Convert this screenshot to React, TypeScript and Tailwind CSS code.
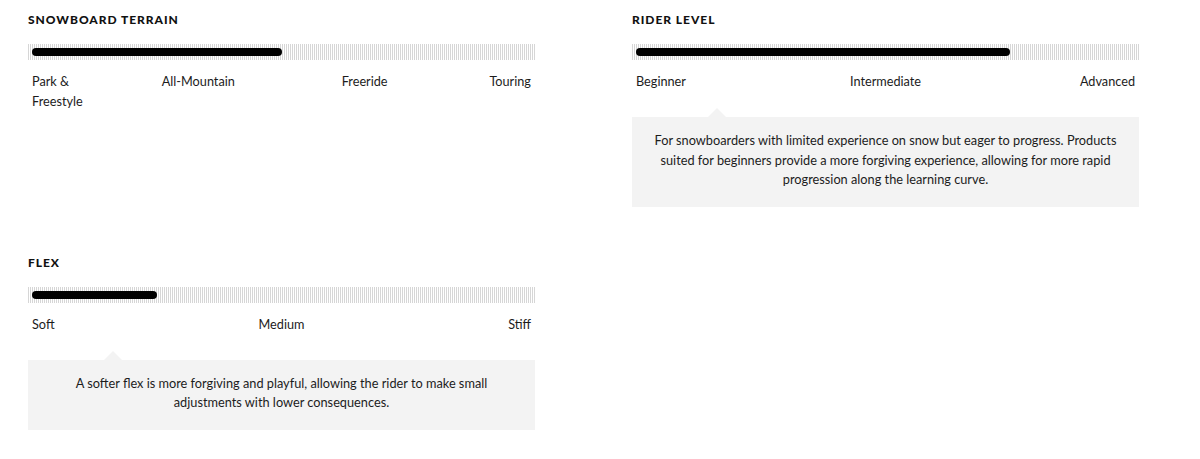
import React from "react";

type Scale = {
  title: string;
  labels: string[];
  value: number; // 0..1
  tip?: string;
};

const scales: Scale[] = [
  {
    title: "Snowboard Terrain",
    labels: ["Park & Freestyle", "All-Mountain", "Freeride", "Touring"],
    value: 0.5,
  },
  {
    title: "Rider Level",
    labels: ["Beginner", "Intermediate", "Advanced"],
    value: 0.75,
    tip: "For snowboarders with limited experience on snow but eager to progress. Products suited for beginners provide a more forgiving experience, allowing for more rapid progression along the learning curve.",
  },
  {
    title: "Flex",
    labels: ["Soft", "Medium", "Stiff"],
    value: 0.25,
    tip: "A softer flex is more forgiving and playful, allowing the rider to make small adjustments with lower consequences.",
  },
];

function Labels({ labels }: { labels: string[] }) {
  const n = labels.length;
  const edge = 100 / ((n - 1) * 2);
  const mid = 100 / (n - 1);
  return (
    <div className="mt-[11px] flex px-1 text-[12.7px] leading-[20px] text-[#1c1c1c]">
      {labels.map((l, i) => {
        const first = i === 0;
        const last = i === n - 1;
        const w = first || last ? edge : mid;
        return (
          <div
            key={l}
            style={{ width: `${w}%` }}
            className={first ? "text-left" : last ? "text-right" : "text-center"}
          >
            {first && n === 4 ? (
              <span className="inline-block max-w-[60px]">{l}</span>
            ) : (
              l
            )}
          </div>
        );
      })}
    </div>
  );
}

function ScaleBlock({ s }: { s: Scale }) {
  return (
    <div className="flex flex-col">
      <h3 className="text-[12px] font-black uppercase leading-[16px] tracking-[0.08em] text-[#111]">
        {s.title}
      </h3>
      <div className="mt-4 flex h-4 items-center bg-[repeating-linear-gradient(90deg,#d6d6d6_0_1px,transparent_1px_2px)] px-1">
        <div className="h-2 rounded-full bg-black" style={{ width: `${s.value * 100}%` }} />
      </div>
      <Labels labels={s.labels} />
      {s.tip && (
        <div className="relative mt-[26px] bg-[#f3f3f3] px-5 pb-[17px] pt-[14px] text-center text-[12.75px] leading-[19.5px] text-[#1c1c1c]">
          <div className="absolute left-[76px] top-[-9px] h-0 w-0 border-x-[9px] border-b-[9px] border-x-transparent border-b-[#f3f3f3]" />
          {s.tip}
        </div>
      )}
    </div>
  );
}

export default function App() {
  return (
    <div className="min-h-[459px] bg-white font-['Lato','Liberation_Sans',sans-serif]">
      <div className="grid w-[1111px] grid-cols-[507px_507px] gap-x-[97px] gap-y-12 pl-7 pt-3">
        <ScaleBlock s={scales[0]} />
        <ScaleBlock s={scales[1]} />
        <ScaleBlock s={scales[2]} />
      </div>
    </div>
  );
}
